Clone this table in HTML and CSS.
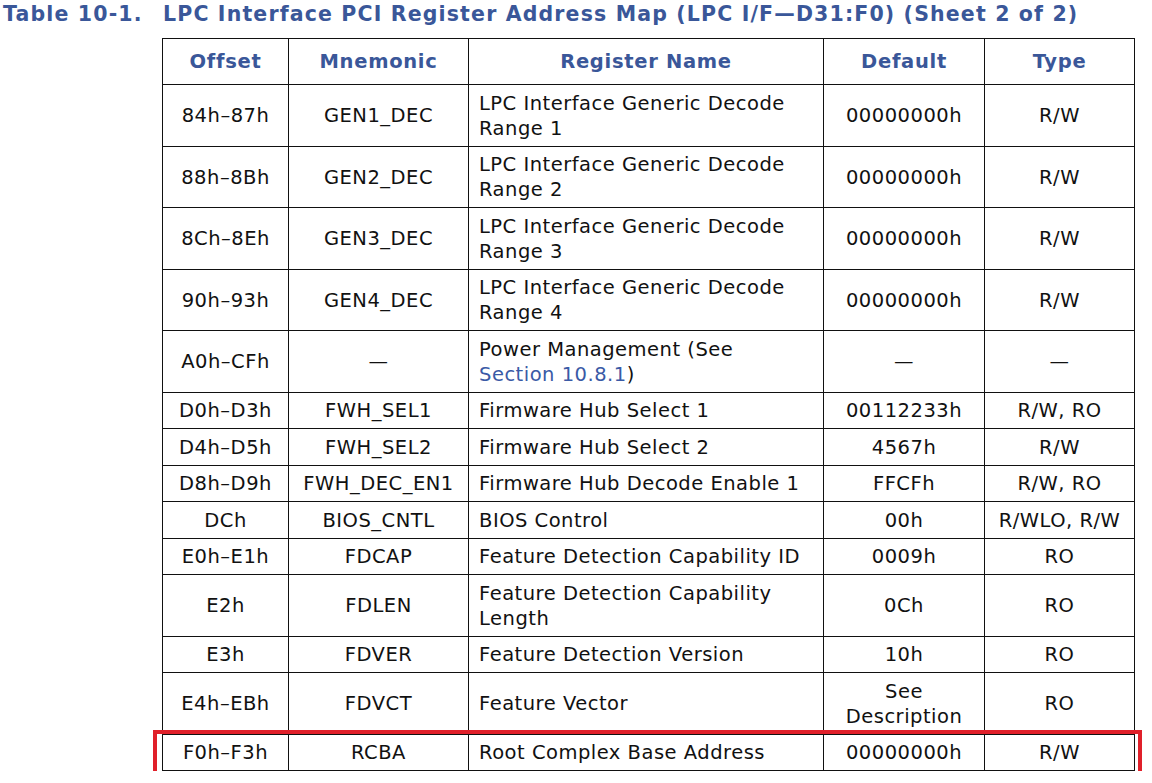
FILE: index.html
```html
<!DOCTYPE html>
<html>
<head>
<meta charset="utf-8">
<link rel="stylesheet" href="styles.css">
</head>
<body>
<div class="page">
  <div class="title">
    <span class="title-num">Table 10-1.</span>
    <span class="title-text">LPC Interface PCI Register Address Map (LPC I/F—D31:F0) (Sheet 2 of 2)</span>
  </div>
  <div class="table-wrap">
    <table class="regmap">
      <colgroup>
        <col class="c-off"><col class="c-mn"><col class="c-name"><col class="c-def"><col class="c-type">
      </colgroup>
      <thead>
        <tr><th>Offset</th><th>Mnemonic</th><th>Register Name</th><th>Default</th><th>Type</th></tr>
      </thead>
      <tbody>
        <tr><td>84h–87h</td><td>GEN1_DEC</td><td class="name">LPC Interface Generic Decode Range 1</td><td>00000000h</td><td>R/W</td></tr>
        <tr><td>88h–8Bh</td><td>GEN2_DEC</td><td class="name">LPC Interface Generic Decode Range 2</td><td>00000000h</td><td>R/W</td></tr>
        <tr><td>8Ch–8Eh</td><td>GEN3_DEC</td><td class="name">LPC Interface Generic Decode Range 3</td><td>00000000h</td><td>R/W</td></tr>
        <tr><td>90h–93h</td><td>GEN4_DEC</td><td class="name">LPC Interface Generic Decode Range 4</td><td>00000000h</td><td>R/W</td></tr>
        <tr><td>A0h–CFh</td><td>—</td><td class="name">Power Management (See<br><span class="link">Section 10.8.1</span>)</td><td>—</td><td>—</td></tr>
        <tr><td>D0h–D3h</td><td>FWH_SEL1</td><td class="name">Firmware Hub Select 1</td><td>00112233h</td><td>R/W, RO</td></tr>
        <tr><td>D4h–D5h</td><td>FWH_SEL2</td><td class="name">Firmware Hub Select 2</td><td>4567h</td><td>R/W</td></tr>
        <tr><td>D8h–D9h</td><td>FWH_DEC_EN1</td><td class="name">Firmware Hub Decode Enable 1</td><td>FFCFh</td><td>R/W, RO</td></tr>
        <tr><td>DCh</td><td>BIOS_CNTL</td><td class="name">BIOS Control</td><td>00h</td><td>R/WLO, R/W</td></tr>
        <tr><td>E0h–E1h</td><td>FDCAP</td><td class="name">Feature Detection Capability ID</td><td>0009h</td><td>RO</td></tr>
        <tr><td>E2h</td><td>FDLEN</td><td class="name">Feature Detection Capability<br>Length</td><td>0Ch</td><td>RO</td></tr>
        <tr><td>E3h</td><td>FDVER</td><td class="name">Feature Detection Version</td><td>10h</td><td>RO</td></tr>
        <tr><td>E4h–EBh</td><td>FDVCT</td><td class="name">Feature Vector</td><td>See<br>Description</td><td>RO</td></tr>
        <tr><td>F0h–F3h</td><td>RCBA</td><td class="name">Root Complex Base Address</td><td>00000000h</td><td>R/W</td></tr>
      </tbody>
    </table>
    <div class="highlight"></div>
  </div>
</div>
</body>
</html>
```
FILE: styles.css
```css
html, body {
  margin: 0;
  padding: 0;
  background: #ffffff;
}
.page {
  font-family: "DejaVu Sans", Verdana, sans-serif;
  color: #111111;
  padding: 0 0 0 3px;
}
.title {
  display: flex;
  align-items: baseline;
  height: 38px;
  padding-top: 2px;
  box-sizing: border-box;
  font-weight: bold;
  font-size: 20.5px;
  letter-spacing: 1.15px;
  color: #3a5799;
  white-space: nowrap;
}
.title-num {
  width: 160px;
  flex: none;
}
.table-wrap {
  position: relative;
  margin-left: 159px;
  width: 972px;
}
.regmap {
  border-collapse: collapse;
  table-layout: fixed;
  width: 972px;
  font-size: 19.5px;
  letter-spacing: 0.5px;
  line-height: 25px;
}
.c-off { width: 126px; }
.c-mn { width: 180px; }
.c-name { width: 355px; }
.c-def { width: 161px; }
.c-type { width: 150px; }
.regmap th, .regmap td {
  border: 1.5px solid #111111;
  text-align: center;
  vertical-align: middle;
  padding: 5.5px 4px 5px 4px;
  white-space: nowrap;
}
.regmap th {
  color: #3a5799;
  font-weight: bold;
  height: 35px;
  padding-top: 5px;
  letter-spacing: 0.7px;
}
.regmap td.name {
  text-align: left;
  padding-left: 10px;
  padding-right: 6px;
  white-space: normal;
}
.link {
  color: #3a5aa6;
}
.highlight {
  position: absolute;
  left: -9px;
  right: -8px;
  bottom: -11px;
  height: 52px;
  border: 4px solid #e0202a;
  box-sizing: border-box;
  pointer-events: none;
}
```
